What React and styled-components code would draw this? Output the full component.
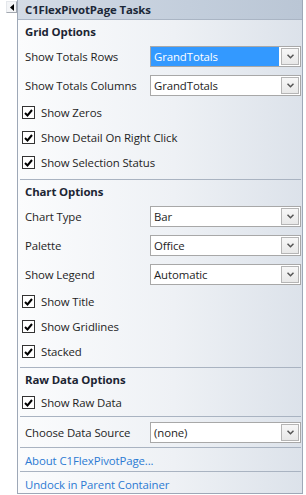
import React from 'react';
import styled, { createGlobalStyle } from 'styled-components';

const GlobalStyle = createGlobalStyle`
  html, body {
    margin: 0;
    padding: 0;
    background: #ffffff;
  }
  body {
    font-family: "Open Sans", "Liberation Sans", sans-serif;
    font-size: 11.4px;
    letter-spacing: -0.1px;
    color: #1e1e1e;
  }
`;

const Root = styled.div`
  display: flex;
  flex-direction: row;
  width: 306px;
  height: 495px;
  overflow: hidden;
`;

const Gutter = styled.div`
  width: 17px;
  flex: none;
  padding: 1px 0 0 6px;
  box-sizing: border-box;
`;

const CollapseButton = styled.div`
  width: 11px;
  height: 12px;
  box-sizing: border-box;
  border: 1px solid #a3a8b0;
  border-top-color: #e4e7eb;
  border-left-color: #e4e7eb;
  background: #f4f5f7;
  display: flex;
  align-items: center;
  justify-content: center;
`;

const Panel = styled.div`
  width: 286px;
  height: 494px;
  box-sizing: border-box;
  border: 1px solid #9ea8b7;
  border-top: none;
  display: flex;
  flex-direction: column;
  background: linear-gradient(to right, #fbfcfd 0%, #eef1f5 55%, #dce2ea 100%);
`;

const Header = styled.div`
  height: 20px;
  flex: none;
  box-sizing: border-box;
  padding-left: 7px;
  display: flex;
  align-items: center;
  font-weight: 700;
  color: #1c2838;
  background: linear-gradient(to right, #d3dbe5 0%, #c3cedc 60%, #bac6d5 100%);
  border-bottom: 1px solid #aab5c4;
`;

const Group = styled.div`
  margin: 0 1px 0 2px;
  padding-top: 1px;
  padding-bottom: ${p => p.$pb ?? 3}px;
  border-bottom: ${p => (p.$last ? 'none' : '1px solid #a9b3c1')};
  display: flex;
  flex-direction: column;
`;

const SectionTitle = styled.div`
  height: 21px;
  padding-left: 5px;
  display: flex;
  align-items: center;
  font-weight: 700;
  color: #1c2533;
`;

const FieldRow = styled.div`
  height: 29px;
  display: flex;
  align-items: center;
`;

const Label = styled.div`
  width: 130px;
  box-sizing: border-box;
  padding-left: 5px;
  flex: none;
  white-space: nowrap;
`;

const Select = styled.div`
  width: 151px;
  height: 21px;
  box-sizing: border-box;
  border: 1px solid #a8a8a8;
  background: #ffffff;
  display: flex;
  align-items: stretch;
`;

const SelectValue = styled.div`
  flex: 1;
  padding-left: 3px;
  margin-right: 1px;
  display: flex;
  align-items: center;
  white-space: nowrap;
  background: ${p => (p.$selected ? '#3399ff' : 'transparent')};
  color: ${p => (p.$selected ? '#ffffff' : '#1e1e1e')};
`;

const ArrowButton = styled.div`
  width: 18px;
  height: 17px;
  margin: 1px;
  box-sizing: border-box;
  border: 1px solid #b5b5b5;
  background: linear-gradient(#f7f7f7, #e8e8e8);
  display: flex;
  align-items: center;
  justify-content: center;
`;

const CheckRow = styled.div`
  height: 25px;
  padding-left: 2px;
  display: flex;
  align-items: center;
  gap: 6px;
  white-space: nowrap;
`;

const Box = styled.div`
  width: 13px;
  height: 13px;
  box-sizing: border-box;
  border: 1px solid #333333;
  background: #ffffff;
  display: flex;
  align-items: center;
  justify-content: center;
`;

const LinkRow = styled.div`
  height: ${p => p.$h}px;
  padding-left: 5px;
  display: flex;
  align-items: center;
  color: #2c7ad3;
  cursor: pointer;
`;

const Chevron = () => (
  <svg width="7" height="5" viewBox="0 0 7 5">
    <path d="M0.5 0.8 L3.5 3.8 L6.5 0.8" fill="none" stroke="#555" strokeWidth="1.5" />
  </svg>
);

const Dropdown = ({ value, selected }) => (
  <Select>
    <SelectValue $selected={selected}>{value}</SelectValue>
    <ArrowButton>
      <Chevron />
    </ArrowButton>
  </Select>
);

const Field = ({ label, value, selected }) => (
  <FieldRow>
    <Label>{label}</Label>
    <Dropdown value={value} selected={selected} />
  </FieldRow>
);

const Check = ({ label }) => (
  <CheckRow>
    <Box>
      <svg width="9" height="8" viewBox="0 0 9 8">
        <path d="M1 4 L3.5 6.5 L8 1" fill="none" stroke="#000" strokeWidth="2" />
      </svg>
    </Box>
    {label}
  </CheckRow>
);

export default function App() {
  return (
    <Root>
      <GlobalStyle />
      <Gutter>
        <CollapseButton>
          <svg width="4" height="7" viewBox="0 0 4 7">
            <path d="M4 0 L0 3.5 L4 7 Z" fill="#000" />
          </svg>
        </CollapseButton>
      </Gutter>
      <Panel>
        <Header>C1FlexPivotPage Tasks</Header>
        <Group $pb={4}>
          <SectionTitle>Grid Options</SectionTitle>
          <Field label="Show Totals Rows" value="GrandTotals" selected />
          <Field label="Show Totals Columns" value="GrandTotals" />
          <Check label="Show Zeros" />
          <Check label="Show Detail On Right Click" />
          <Check label="Show Selection Status" />
        </Group>
        <Group $pb={3}>
          <SectionTitle>Chart Options</SectionTitle>
          <Field label="Chart Type" value="Bar" />
          <Field label="Palette" value="Office" />
          <Field label="Show Legend" value="Automatic" />
          <Check label="Show Title" />
          <Check label="Show Gridlines" />
          <Check label="Stacked" />
        </Group>
        <Group $pb={1}>
          <SectionTitle>Raw Data Options</SectionTitle>
          <Check label="Show Raw Data" />
        </Group>
        <Group $pb={0}>
          <Field label="Choose Data Source" value="(none)" />
        </Group>
        <Group $pb={0}>
          <LinkRow $h={22}>About C1FlexPivotPage...</LinkRow>
        </Group>
        <Group $pb={0} $last>
          <LinkRow $h={23}>Undock in Parent Container</LinkRow>
        </Group>
      </Panel>
    </Root>
  );
}
